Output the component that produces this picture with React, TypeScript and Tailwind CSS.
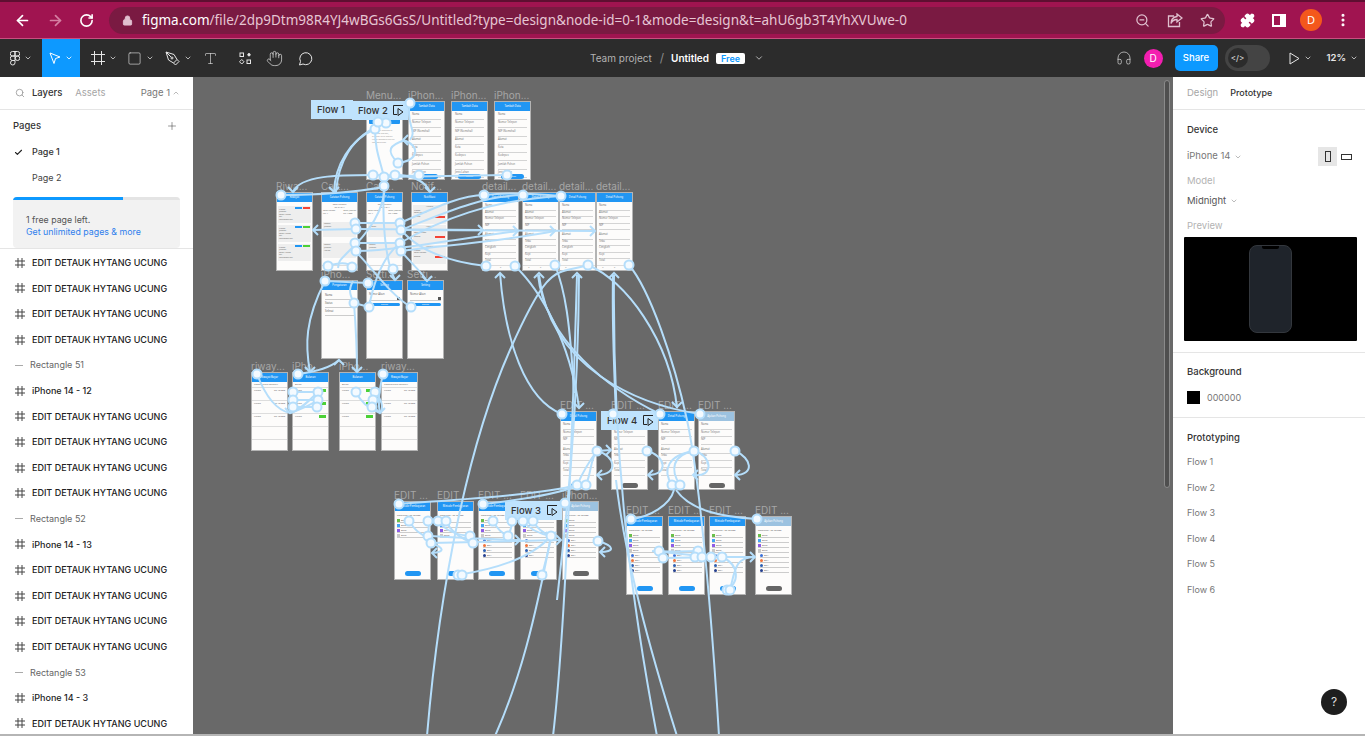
import {
  ArrowLeft, ArrowRight, RotateCw, Lock, ZoomOut, Star, Puzzle, MoreVertical, Headphones,
  Search, Plus, Check, ChevronDown, ChevronUp, Hand, Type, Square,
} from 'lucide-react';

const ink = 'font-["Inter",sans-serif]';

// ---------- wires of the prototype view, in page coordinates ----------
const wires = [
  // long ones running off the bottom
  'M427 736C440 580 470 440 510 350S555 275 588 265',
  'M495 736C520 680 535 620 551 536',
  'M553 736C562 660 570 520 577 275',
  'M557 600C566 520 578 420 579 275',
  'M657 736C635 620 612 470 614 275',
  'M677 736C650 650 625 560 616 480',
  'M719 736C712 620 700 480 687 420S650 290 629 265',
  // between details and edit row
  'M401 230C420 252 450 262 486 266',
  'M562 414C525 400 505 340 500 273',
  'M515 266C540 290 570 340 579 408',
  'M700 414C640 405 550 370 539 275',
  'M660 414C610 390 545 340 538 275',
  'M588 265C625 280 670 340 677 408',
  'M555 265C565 290 570 320 574 393',
  'M613 275C612 320 614 370 616 414',
  // first rows
  'M375 129C350 140 335 165 334 192',
  'M386 123C350 135 338 165 336 192',
  'M373 175C340 175 300 175 293 192',
  'M281 195C310 195 350 193 384 187',
  'M375 129C375 150 380 160 384 177',
  'M410 103C405 125 418 130 410 140',
  'M398 163C385 150 390 145 405 140',
  'M398 163C420 160 420 145 403 140',
  'M384 177L507 175',
  'M373 175L419 176',
  'M395 175C410 175 425 180 430 192',
  'M384 177C388 200 375 225 355 245S340 260 338 268',
  'M384 186C382 220 385 260 395 280',
  'M401 251C410 262 420 270 427 281',
  'M355 251C370 265 390 295 411 307',
  'M400 243C385 255 375 275 369 307',
  'M325 281L368 283',
  'M354 303L369 307',
  'M354 303C350 295 348 290 353 281',
  'M325 281C305 320 305 345 310 372',
  'M354 303C356 330 357 350 357 372',
  'M298 374C315 372 330 368 339 360',
  // second row across
  'M356 229L313 230',
  'M356 229L483 230',
  'M401 230L595 231',
  'M356 251C400 250 450 240 518 231',
  'M401 251C450 245 510 240 555 231',
  'M400 223C430 210 460 195 484 195',
  'M401 230C440 215 480 196 523 195',
  'M400 243C440 220 490 200 561 196',
  'M484 195C510 192 540 194 561 196',
  'M355 223L400 223',
  'M355 243L400 243',
  'M328 266C340 262 348 262 352 267',
  // riwayat row
  'M257 374C265 395 275 410 290 413',
  'M318 392C310 400 300 410 290 413',
  'M318 400C310 405 300 410 290 413',
  'M293 392L318 392',
  'M293 400L318 400',
  'M293 407L317 407',
  'M383 374C378 395 378 405 380 413',
  'M356 392C362 405 372 410 380 413',
  'M375 392C382 400 384 408 380 413',
  // edit row 1
  'M597 451L611 450',
  'M597 451C615 455 620 475 597 475',
  'M586 485C592 470 590 460 597 451',
  'M577 485C584 470 590 460 597 451',
  'M647 451C665 455 670 475 648 475',
  'M694 451C712 455 715 478 693 475',
  'M680 485C670 470 672 455 694 451',
  'M672 485C662 470 668 455 694 451',
  'M735 451C752 458 755 475 735 475',
  'M674 490C670 505 650 517 631 519',
  'M676 490C690 510 720 517 757 519',
  // edit row 2
  'M399 504C450 500 540 495 577 485',
  'M483 504C520 500 555 495 580 485',
  'M428 536C470 538 500 540 520 540',
  'M431 543L561 540',
  'M409 521C415 530 420 535 430 538',
  'M428 521C430 528 428 532 428 536',
  'M438 521C445 530 455 535 470 536',
  'M446 521C450 530 460 538 473 543',
  'M493 521C498 530 502 533 508 536',
  'M512 521C512 528 510 532 508 536',
  'M523 521C530 530 540 534 551 536',
  'M533 521C538 530 545 534 551 536',
  'M458 575C490 570 530 560 551 536',
  'M542 575C546 560 550 545 551 536',
  'M598 541C615 546 615 552 600 552',
  'M431 543C445 548 445 552 432 553',
  // edit row 3
  'M652 551L711 557',
  'M659 551C670 552 690 551 698 551',
  'M663 558L722 557',
  'M722 557L755 557',
  'M730 590C735 570 735 557 755 557',
  'M725 590C740 585 740 565 722 557',
];

const arrows = [
  [293, 192, 'd'], [334, 192, 'd'], [403, 140, 'l'], [430, 192, 'd'], [427, 281, 'd'], [395, 280, 'd'],
  [313, 230, 'l'], [483, 230, 'r'], [518, 231, 'r'], [555, 231, 'r'], [595, 231, 'r'],
  [500, 273, 'u'], [539, 273, 'u'], [577, 273, 'u'], [614, 273, 'u'],
  [579, 408, 'd'], [677, 407, 'd'], [310, 372, 'd'], [357, 372, 'd'], [339, 360, 'u'],
  [290, 413, 'd'], [380, 413, 'd'], [611, 450, 'r'], [597, 475, 'l'], [648, 475, 'l'], [693, 475, 'l'], [735, 475, 'l'],
  [520, 540, 'r'], [561, 540, 'r'], [600, 552, 'l'], [432, 553, 'l'], [755, 557, 'r'], [551, 537, 'd'],
];

const nodes = [
  [410, 103], [386, 123], [375, 129], [378, 122], [398, 163], [373, 175], [384, 177], [395, 175], [419, 175], [507, 175],
  [281, 195], [384, 186], [484, 195], [523, 195], [561, 196], [355, 223], [356, 229], [400, 223], [401, 230],
  [355, 243], [356, 251], [400, 243], [401, 251], [328, 266], [352, 267], [393, 269], [486, 266], [515, 266],
  [555, 265], [588, 265], [629, 265], [325, 281], [368, 283], [354, 303], [369, 307], [411, 307],
  [257, 374], [298, 374], [383, 374], [293, 392], [293, 400], [293, 407], [318, 392], [318, 400], [317, 407],
  [356, 392], [375, 392], [373, 400], [372, 407],
  [562, 414], [613, 414], [660, 414], [700, 414], [597, 451], [647, 451], [694, 451], [735, 451],
  [577, 485], [586, 485], [672, 485], [680, 485],
  [399, 504], [483, 504], [565, 503], [409, 521], [428, 521], [438, 521], [446, 521], [493, 521], [512, 521], [523, 521], [533, 521],
  [428, 536], [431, 543], [470, 536], [473, 543], [508, 536], [551, 536], [598, 541], [458, 575], [462, 575], [542, 575],
  [631, 519], [757, 519], [659, 551], [663, 558], [698, 551], [695, 557], [702, 557], [711, 557], [722, 557], [727, 590], [730, 590],
] as const;

function Wires() {
  const chevron = (x: number, y: number, d: string) => {
    const s = 5;
    if (d === 'd') return `M${x - s} ${y - s}L${x} ${y}L${x + s} ${y - s}`;
    if (d === 'u') return `M${x - s} ${y + s}L${x} ${y}L${x + s} ${y + s}`;
    if (d === 'l') return `M${x + s} ${y - s}L${x} ${y}L${x + s} ${y + s}`;
    return `M${x - s} ${y - s}L${x} ${y}L${x - s} ${y + s}`;
  };
  return (
    <svg className="absolute left-0 top-0 w-[1365px] h-[736px] pointer-events-none" viewBox="0 0 1365 736" fill="none">
      {wires.map((d, i) => (
        <path key={i} d={d} stroke="#b5defb" strokeWidth="2" />
      ))}
      {arrows.map(([x, y, d], i) => (
        <path key={i} d={chevron(x as number, y as number, d as string)} stroke="#b5defb" strokeWidth="2" />
      ))}
      {nodes.map(([x, y], i) => (
        <circle key={i} cx={x} cy={y} r="4.5" fill="#f4faff" stroke="#b5defb" strokeWidth="2" />
      ))}
    </svg>
  );
}

// ---------- tiny phone frames ----------
function Field({ label, value }: { label: string; value?: string }) {
  return (
    <div>
      <p className="text-[2.6px] leading-[3px] text-[#777]">{label}</p>
      <div className="h-[3.5px] border-b border-[#d4d4d4] text-[2.4px] leading-[3px] text-[#888]">{value}</div>
    </div>
  );
}

function Form({ pill }: { pill: string }) {
  return (
    <div className="relative flex-1 px-[3px] pt-[2px]">
      {['Nama', 'Nomor Telepon', 'NIP (Nomshal)', 'Alamat', 'Kota', 'Kodepos', 'Jumlah Pohon', 'Jenis Lahan'].map(l => (
        <div key={l} className="mb-[1.25px]">
          <p className="text-[2.6px] leading-[3px] text-[#777]">{l}</p>
          <div className="h-[4px] border-b border-[#d4d4d4]" />
        </div>
      ))}
      <div className="absolute bottom-[0px] left-[6px] right-[6px] h-[5px] rounded-full bg-[#2196f3] text-center text-[2px] leading-[5px] text-white">{pill}</div>
    </div>
  );
}

function Menu() {
  return (
    <div className="flex-1 px-[2px] pt-[3px]">
      <div className="h-[10px] rounded-[1px] bg-[#2196f3]" />
      <div className="mt-[5px] px-[3px] text-[2.4px] leading-[3px] text-[#999]">
        Selamat datang di aplikasi petani, silakan pilih menu yang tersedia untuk melanjutkan
      </div>
    </div>
  );
}

function HistoryCard({ color }: { color: string }) {
  return (
    <div className="mb-[2px] h-[17px] bg-[#eeeeee] px-[1px] pt-[1px] text-[2.2px] leading-[2.6px] text-[#666]">
      <div className="flex justify-end gap-[1px]">
        <span className="h-[1.5px] w-[7px] bg-[#2196f3]" />
        <span className={`h-[1.5px] w-[7px] ${color}`} />
      </div>
      <p>Nama</p><p>Jumlah</p><p>Total Harga</p><p>Tgl</p><p>Pengambilan</p>
    </div>
  );
}

function History() {
  return (
    <div className="flex-1 px-[1px] pt-[4px]">
      <HistoryCard color="bg-[#f44336]" />
      <HistoryCard color="bg-[#4cd137]" />
      <HistoryCard color="bg-[#4cd137]" />
    </div>
  );
}

function Catch() {
  return (
    <div className="relative flex-1 px-[1px] pt-[2px] text-[2.2px] leading-[2.6px] text-[#666]">
      <p className="text-center">Total Pohong<br />Rp 64.214</p>
      <div className="mt-[1px] flex justify-between"><span>Total Pohon<br />Kg: 4</span><span>Total Jumlah<br />Rp 4.000</span></div>
      <div className="mt-[7px] h-[15px] bg-[#eeeeee] p-[1px]">Petani<br />Jumlah<br />Harga</div>
      <div className="mt-[6px] h-[15px] bg-[#eeeeee] p-[1px]">Petani<br />Jumlah<br />Harga</div>
      <div className="absolute bottom-0 left-0 right-0 h-[5px] border-t border-[#ddd]" />
    </div>
  );
}

function Notif() {
  return (
    <div className="flex-1 px-[1px] pt-[3px] text-[2.2px] leading-[2.6px] text-[#666]">
      {[0, 1, 2].map(i => (
        <div key={i} className="mb-[1px] h-[19px] bg-[#eeeeee] p-[1px]">
          <p className="text-center">Hitung</p>
          <p className="mt-[1px]">Nama</p>
          <p>Total Pohon</p>
          <div className="mt-[1px] flex justify-between"><span>Status</span><span className="h-[2px] w-[10px] bg-[#f44336]" /></div>
        </div>
      ))}
    </div>
  );
}

function Detail() {
  return (
    <div className="relative flex-1 px-[2px] pt-[2px]">
      {['Nama', 'Alamat', 'Nomor Telepon', 'NIP', 'Alamat', 'Tebu', 'Cengkeh', 'Kopi', 'Total'].map((l, i) => (
        <div key={i} className={i === 4 ? 'mt-[3px]' : ''}>
          <Field label={l} />
        </div>
      ))}
      <div className="absolute bottom-0 left-0 right-0 flex h-[5px] justify-around border-t border-[#ddd] bg-[#fdfcfb] text-[2px] text-[#888]">
        <span>o</span><span>o</span><span>o</span>
      </div>
    </div>
  );
}

function Pick() {
  return (
    <div className="flex-1 px-[3px] pt-[4px] text-[2.6px] leading-[3px] text-[#666]">
      {['Nama', 'Status', 'Selesai'].map(l => (
        <div key={l} className="mb-[2px]">
          <p>{l}</p>
          <div className="h-[3px] border-b border-[#ccc]" />
        </div>
      ))}
    </div>
  );
}

function Setting() {
  return (
    <div className="flex-1 px-[2px] pt-[3px] text-[2.6px] leading-[3px] text-[#666]">
      <p>Nomor Akun</p>
      <div className="flex h-[5px] items-center justify-end border-b border-[#ccc]">
        <span className="h-[3px] w-[3px] bg-[#555]" />
      </div>
      <div className="mt-[2px] h-[3px] rounded-full bg-[#2196f3] text-center text-[2px] leading-[3px] text-white">Simpan</div>
    </div>
  );
}

function RowList({ green }: { green?: boolean }) {
  return (
    <div className="flex-1 text-[2.4px] leading-[3px] text-[#666]">
      <p className="border-b border-[#ddd] px-[2px] py-[1px]">{green ? 'Bulan' : 'Pembayaran Terakhir'}</p>
      {[0, 1, 2, 3, 4].map(i => (
        <div key={i} className="flex h-[13px] justify-between border-b border-[#ddd] px-[2px] pt-[1px]">
          <span>{i < 3 ? 'Nama' : ''}</span>
          {i < 3 && (green ? <span className="h-[3px] w-[7px] bg-[#4cd137]" /> : <span>Rp 40.000</span>)}
        </div>
      ))}
    </div>
  );
}

function EditForm({ gray }: { gray?: boolean }) {
  return (
    <div className="relative flex-1 px-[2px] pt-[2px]">
      {['Nama', 'Nomor Telepon', 'NIP', 'Alamat', 'Tebu', 'Kopi', 'Total'].map((l, i) => (
        <div key={i} className={i === 3 ? 'mt-[3px]' : 'mb-[1px]'}>
          <Field label={l} />
        </div>
      ))}
      <div className={`absolute bottom-[1px] left-[10px] h-[5px] w-[16px] rounded-full ${gray ? 'bg-[#666]' : 'bg-[#2196f3]'}`} />
    </div>
  );
}

function EditBank({ gray, full }: { gray?: boolean; full?: boolean }) {
  const dots = ['bg-[#6abf4b]', 'bg-[#42a5f5]', 'bg-[#8e5ce6]', 'bg-[#c9c9c9]'];
  const banks = ['bg-[#3b6fd8]', 'bg-[#f2733a]', 'bg-[#2c5fb3]', 'bg-[#243f8f]'];
  return (
    <div className="relative flex-1 px-[2px] pt-[3px] text-[2.4px] leading-[3px] text-[#666]">
      <p className="mb-[2px]">Rekening : Rp 60.000</p>
      {dots.map(c => (
        <div key={c} className="mb-[1px] flex h-[4px] items-center gap-[1px] border-b border-[#ccc]">
          <span className={`h-[3px] w-[3px] ${c}`} />Bank
        </div>
      ))}
      {full && banks.map(c => (
        <div key={c} className="mb-[1px] ml-[2px] flex h-[4px] items-center gap-[1px] border-b border-[#ccc]">
          <span className={`h-[3px] w-[3px] rounded-full ${c}`} />BCA
        </div>
      ))}
      <div className={`absolute bottom-[3px] left-[10px] h-[5px] w-[16px] rounded-full ${gray ? 'bg-[#666]' : 'bg-[#2196f3]'}`} />
    </div>
  );
}

type FrameProps = {
  pos: string;
  label: string;
  title: string;
  gray?: boolean;
  children: React.ReactNode;
};

function Frame({ pos, label, title, gray, children }: FrameProps) {
  return (
    <div className={`absolute w-[37px] h-[79px] ${pos}`}>
      <p className={`absolute left-0 top-[-12px] whitespace-nowrap text-[10px] leading-[12px] text-[#a6a6a6] ${ink}`}>{label}</p>
      <div className="flex h-full w-full flex-col overflow-hidden border border-[#b4b4b4] bg-[#fdfcfb]">
        <div className={`h-[9px] shrink-0 text-center text-[2.6px] leading-[9px] text-white ${gray ? 'bg-[#9cc2e0]' : 'bg-[#2196f3]'}`}>{title}</div>
        {children}
      </div>
    </div>
  );
}

function FlowChip({ pos, text, icon }: { pos: string; text: string; icon: string }) {
  return (
    <div className={`absolute flex h-[19px] items-center bg-[#bfe3fd] pl-[6px] pt-[1px] text-[9.5px] font-medium text-[#333] ${pos} ${ink}`}>
      <span>{text}</span>
      <svg className={`absolute top-[4px] ${icon}`} width="11" height="12" viewBox="0 0 11 12" fill="none" stroke="#222">
        <path d="M10 .5H.5V9.5H4" />
        <path d="M5 3.500L10 7L5 10.500Z" />
      </svg>
    </div>
  );
}

function Canvas() {
  return (
    <div className="relative flex-1 overflow-hidden bg-[#696969]">
      {/* page coordinates inside this layer */}
      <div className="absolute left-[-193px] top-[-77px] h-[736px] w-[1365px]">
        <Frame pos="left-[366px] top-[101px]" label="Menu..." title=""><Menu /></Frame>
        <Frame pos="left-[408px] top-[101px]" label="iPhon..." title="Tambah Data"><Form pill="Simpan" /></Frame>
        <Frame pos="left-[451px] top-[101px]" label="iPhon..." title="Tambah Data"><Form pill="Simpan" /></Frame>
        <Frame pos="left-[494px] top-[101px]" label="iPhon..." title="Tambah Data"><Form pill="Simpan" /></Frame>

        <Frame pos="left-[276px] top-[192px]" label="Riwa..." title="Riwayat"><History /></Frame>
        <Frame pos="left-[321px] top-[192px]" label="Catt..." title="Catatan Pohong"><Catch /></Frame>
        <Frame pos="left-[366px] top-[192px]" label="Catt..." title="Catatan Pohong"><Catch /></Frame>
        <Frame pos="left-[411px] top-[192px]" label="Notif..." title="Notifikasi"><Notif /></Frame>
        <Frame pos="left-[482px] top-[192px]" label="detail..." title="Detail Pohong"><Detail /></Frame>
        <Frame pos="left-[522px] top-[192px]" label="detail..." title="Detail Pohong"><Detail /></Frame>
        <Frame pos="left-[559px] top-[192px]" label="detail..." title="Detail Pohong"><Detail /></Frame>
        <Frame pos="left-[596px] top-[192px]" label="detail..." title="Detail Pohong"><Detail /></Frame>

        <Frame pos="left-[321px] top-[280px]" label="iPho..." title="Pengaturan"><Pick /></Frame>
        <Frame pos="left-[366px] top-[280px]" label="Setti..." title="Setting"><Setting /></Frame>
        <Frame pos="left-[407px] top-[280px]" label="Setti..." title="Setting"><Setting /></Frame>

        <Frame pos="left-[251px] top-[372px]" label="riway..." title="Riwayat Bayar"><RowList /></Frame>
        <Frame pos="left-[292px] top-[372px]" label="iPho..." title="Bulanan"><RowList green /></Frame>
        <Frame pos="left-[339px] top-[372px]" label="iPho..." title="Bulanan"><RowList green /></Frame>
        <Frame pos="left-[381px] top-[372px]" label="riway..." title="Riwayat Bayar"><RowList /></Frame>

        <Frame pos="left-[560px] top-[411px]" label="EDIT ..." title="Detail Pohong"><EditForm /></Frame>
        <Frame pos="left-[611px] top-[411px]" label="EDIT ..." title=""><EditForm gray /></Frame>
        <Frame pos="left-[658px] top-[411px]" label="EDIT ..." title="Detail Pohong"><EditForm /></Frame>
        <Frame pos="left-[698px] top-[411px]" label="EDIT ..." title="Ajukan Pohong" gray><EditForm gray /></Frame>

        <Frame pos="left-[394px] top-[501px]" label="EDIT ..." title="Metode Pembayaran"><EditBank /></Frame>
        <Frame pos="left-[437px] top-[501px]" label="EDIT ..." title="Metode Pembayaran"><EditBank /></Frame>
        <Frame pos="left-[478px] top-[501px]" label="EDIT ..." title="Metode Pembayaran"><EditBank full /></Frame>
        <Frame pos="left-[520px] top-[501px]" label="EDIT ..." title=""><EditBank full /></Frame>
        <Frame pos="left-[562px] top-[501px]" label="iPhon..." title="Ajukan Pohong" gray><EditBank gray full /></Frame>

        <Frame pos="left-[626px] top-[516px]" label="EDIT ..." title="Metode Pembayaran"><EditBank full /></Frame>
        <Frame pos="left-[668px] top-[516px]" label="EDIT ..." title="Metode Pembayaran"><EditBank full /></Frame>
        <Frame pos="left-[709px] top-[516px]" label="EDIT ..." title="Metode Pembayaran"><EditBank full /></Frame>
        <Frame pos="left-[755px] top-[516px]" label="EDIT ..." title="Ajukan Pohong" gray><EditBank gray full /></Frame>

        <FlowChip pos="left-[311px] top-[100px] w-[42px]" text="Flow 1" icon="hidden" />
        <FlowChip pos="left-[352px] top-[101px] w-[56px]" text="Flow 2" icon="left-[41px]" />
        <FlowChip pos="left-[505px] top-[501px] w-[57px]" text="Flow 3" icon="left-[42px]" />
        <FlowChip pos="left-[601px] top-[411px] w-[57px]" text="Flow 4" icon="left-[42px]" />

        <Wires />

        <div className="absolute left-[1164px] top-[80px] h-[408px] w-[6px] rounded-full border border-[#8a8a8a] bg-[#4f4f4f]" />
      </div>
    </div>
  );
}

// ---------- chrome + toolbar ----------
function BrowserBar() {
  return (
    <div className="h-[39px] shrink-0 border-b border-[#c94f80] bg-[#a01450]">
      <div className="h-[2px] bg-[#5e0f31]" />
      <div className="flex h-[36px] items-center pl-[14px] pr-[14px]">
        <ArrowLeft size={17} strokeWidth={2.4} className="text-white" />
        <ArrowRight size={17} strokeWidth={2.4} className="ml-[16px] text-[#d580a3]" />
        <RotateCw size={15} strokeWidth={2.6} className="ml-[15px] text-white" />
        <div className="ml-[15px] flex h-[27px] flex-1 items-center rounded-full bg-[#7a1a42] pl-[13px] pr-[10px] font-['Noto_Sans',sans-serif] text-[13.52px] text-[#e6c6d3]">
          <Lock size={11} fill="#e0c0cf" className="text-[#e0c0cf]" />
          <span className="ml-[9px] text-white">figma.com</span>
          <span>/file/2dp9Dtm98R4YJ4wBGs6GsS/Untitled?type=design&amp;node-id=0-1&amp;mode=design&amp;t=ahU6gb3T4YhXVUwe-0</span>
          <div className="ml-auto flex items-center gap-[17px] text-[#e0c0cf]">
            <ZoomOut size={15} />
            <svg width="16" height="15" viewBox="0 0 16 15" fill="none" stroke="#e0c0cf" strokeWidth="1.300">
              <path d="M7 3H1.500V13.500H12.500V9" />
              <path d="M10 1L15 5L10 9V6.500C7 6.500 5 8 4 10.500C4 6.500 6.500 4 10 3.500Z" />
            </svg>
            <Star size={15} />
          </div>
        </div>
        <Puzzle size={15} fill="white" className="ml-[15px] text-white" />
        <div className="ml-[17px] flex h-[13px] w-[14px] justify-end border-2 border-white">
          <span className="h-full w-[4px] bg-white" />
        </div>
        <div className="ml-[14px] flex h-[22px] w-[22px] items-center justify-center rounded-full bg-[#f4581c] text-[11px] text-white">D</div>
        <MoreVertical size={16} strokeWidth={2.6} className="ml-[13px] text-white" />
      </div>
    </div>
  );
}

function ToolCaret({ cls = 'text-[#d0d0d0]' }: { cls?: string }) {
  return <ChevronDown size={8} strokeWidth={2.5} className={`ml-[4px] ${cls}`} />;
}

function Toolbar() {
  return (
    <div className={`relative flex h-[38px] shrink-0 items-center bg-[#2c2c2c] text-[#e6e6e6] ${ink}`}>
      <div className="ml-[10px] flex w-[32px] items-center">
        <svg width="10" height="15" viewBox="0 0 10 15" fill="none" stroke="#e6e6e6">
          <path d="M5 .5H2.500a2.250 2.250 0 0 0 0 4.500H5ZM5 .5H7.500a2.250 2.250 0 0 1 0 4.500H5ZM5 5H2.500a2.250 2.250 0 0 0 0 4.500H5Z" />
          <circle cx="7.500" cy="7.250" r="2.250" />
          <path d="M5 9.500H2.500a2.250 2.250 0 1 0 2.500 2.250Z" />
        </svg>
        <ToolCaret />
      </div>
      <div className="flex h-full w-[38px] items-center justify-center bg-[#0d99ff]">
        <svg width="12" height="13" viewBox="0 0 12 13" fill="none" stroke="white"><path d="M1 1l10 4-4.500 1.500L5 11.500Z" /></svg>
        <ToolCaret cls="text-white" />
      </div>
      <div className="ml-[11px] flex items-center">
        <svg width="14" height="14" viewBox="0 0 14 14" fill="none" stroke="#e6e6e6"><path d="M3.500 0v14M10.500 0v14M0 3.500h14M0 10.500h14" /></svg>
        <ToolCaret />
      </div>
      <div className="ml-[10px] flex items-center">
        <Square size={15} strokeWidth={1} />
        <ToolCaret />
      </div>
      <div className="ml-[11px] flex items-center">
        <svg width="15" height="15" viewBox="0 0 15 15" fill="none" stroke="#e6e6e6"><path d="M1 1l8 2.500 3 5-3.500 3.500-5-3ZM1 1l5 5M12 8.500l2 2-3.500 3.500-2-2" /><circle cx="7" cy="7" r="1" /></svg>
        <ToolCaret />
      </div>
      <Type size={15} strokeWidth={1} className="ml-[11px]" />
      <svg className="ml-[21px]" width="13" height="13" viewBox="0 0 13 13" fill="none" stroke="#e6e6e6">
        <rect x="1" y="1" width="3.500" height="3.500" />
        <circle cx="10" cy="2.750" r="1.200" fill="#e6e6e6" />
        <path d="M2.750 7.500L5 9.750 2.750 12 .5 9.750Z" />
        <rect x="8" y="8" width="3.500" height="3.500" />
      </svg>
      <Hand size={17} strokeWidth={1} className="ml-[14px]" />
      <svg className="ml-[15px]" width="15" height="15" viewBox="0 0 15 15" fill="none" stroke="#e6e6e6"><path d="M1.500 14l1-3.500A6 6 0 1 1 5 13Z" /></svg>

      <div className="absolute left-[590px] flex items-center text-[10px]">
        <span className="text-[#b3b3b3]">Team project</span>
        <span className="ml-[8px] text-[12px] text-[#8a8a8a]">/</span>
        <span className="ml-[7px] font-semibold text-white">Untitled</span>
        <span className="ml-[7px] rounded-[2px] bg-white px-[5px] text-[9px] font-semibold leading-[11px] text-[#0d99ff]">Free</span>
        <ChevronDown size={10} className="ml-[9px] text-[#d0d0d0]" />
      </div>

      <div className="ml-auto flex items-center pr-[7px]">
        <Headphones size={16} strokeWidth={1} />
        <div className="ml-[12px] flex h-[19px] w-[19px] items-center justify-center rounded-full bg-[#f31eb0] text-[10px] text-white">D</div>
        <div className="ml-[12px] flex h-[26px] w-[43px] items-center justify-center rounded-[5px] bg-[#0d99ff] text-[9.5px] font-medium text-white">Share</div>
        <div className="ml-[7px] flex h-[26px] w-[45px] items-center rounded-full bg-[#444] pl-[3px]">
          <div className="flex h-[20px] w-[20px] items-center justify-center rounded-full bg-[#2c2c2c] text-[8px] text-[#e6e6e6]">&lt;/&gt;</div>
        </div>
        <svg className="ml-[19px]" width="11" height="13" viewBox="0 0 11 13" fill="none" stroke="#e6e6e6"><path d="M1 1l9 5.500L1 12Z" /></svg>
        <ToolCaret />
        <span className="ml-[15px] text-[9.5px] font-semibold">12%</span>
        <ToolCaret />
      </div>
    </div>
  );
}

// ---------- side panels ----------
const E = 'EDIT DETAUK HYTANG UCUNG';
const layers: [string, 'frame' | 'rect'][] = [
  [E, 'frame'], [E, 'frame'], [E, 'frame'], [E, 'frame'], ['Rectangle 51', 'rect'], ['iPhone 14 - 12', 'frame'],
  [E, 'frame'], [E, 'frame'], [E, 'frame'], [E, 'frame'], ['Rectangle 52', 'rect'], ['iPhone 14 - 13', 'frame'],
  [E, 'frame'], [E, 'frame'], [E, 'frame'], [E, 'frame'], ['Rectangle 53', 'rect'], ['iPhone 14 - 3', 'frame'], [E, 'frame'],
];

function LeftPanel() {
  return (
    <div className={`w-[193px] shrink-0 overflow-hidden bg-white text-[#333] ${ink}`}>
      <div className="flex h-[33px] items-center border-b border-[#e5e5e5] pl-[15px] pr-[13px] text-[9.5px]">
        <Search size={10} className="text-[#999]" />
        <span className="ml-[7px] font-medium">Layers</span>
        <span className="ml-[13px] text-[#a6a6a6]">Assets</span>
        <span className="ml-auto text-[#777]">Page 1</span>
        <ChevronUp size={8} className="ml-[2px] text-[#999]" />
      </div>
      <div className="flex h-[29px] items-center pl-[13px] pr-[15px] pt-[3px] text-[9.5px] font-medium">
        <span>Pages</span>
        <Plus size={12} strokeWidth={1} className="ml-auto" />
      </div>
      <div className="flex h-[26px] items-center pl-[14px] text-[9px]">
        <Check size={9} strokeWidth={3} className="text-[#222]" />
        <span className="ml-[9px] font-medium">Page 1</span>
      </div>
      <div className="flex h-[26px] items-center pl-[32px] text-[9px] text-[#444]">Page 2</div>
      <div className="mx-[13px] mt-[6px] h-[51px] overflow-hidden rounded-[4px] bg-[#f2f2f2] text-[8.8px]">
        <div className="h-[3px] bg-[#e4e4e4]"><div className="h-full w-[110px] bg-[#0d99ff]" /></div>
        <p className="ml-[13px] mt-[14px] leading-[12px] text-[#555]">1 free page left.</p>
        <p className="ml-[13px] leading-[12px] text-[#2f80ed]">Get unlimited pages &amp; more</p>
      </div>
      <div className="border-t border-[#e5e5e5] pt-[1px]">
        {layers.map(([t, k], i) => (
          <div key={i} className="flex h-[25.6px] items-center pl-[15px]">
            {k === 'frame' ? (
              <svg width="10" height="10" viewBox="0 0 10 10" fill="none" stroke="#444"><path d="M3 0v10M7 0v10M0 3h10M0 7h10" /></svg>
            ) : (
              <span className="h-px w-[8px] bg-[#aaa]" />
            )}
            <span className={`ml-[7px] whitespace-nowrap text-[9px] ${k === 'frame' ? 'font-medium text-[#222]' : 'text-[#666]'}`}>{t}</span>
          </div>
        ))}
      </div>
    </div>
  );
}

function RightPanel() {
  return (
    <div className={`relative w-[192px] shrink-0 bg-white text-[9.5px] text-[#333] ${ink}`}>
      <div className="flex h-[33px] items-center border-b border-[#e5e5e5] pl-[14px]">
        <span className="text-[#a6a6a6]">Design</span>
        <span className="ml-[12px] text-[9px] font-medium">Prototype</span>
      </div>
      <div className="border-b border-[#e5e5e5] pb-[11px] pl-[14px]">
        <p className="pt-[14px] font-medium leading-[12px]">Device</p>
        <div className="mt-[11px] flex h-[19px] items-center">
          <span className="text-[#777]">iPhone 14</span>
          <ChevronDown size={8} className="ml-[3px] text-[#999]" />
          <div className="ml-auto flex h-[19px] w-[19px] items-center justify-center bg-[#e6e6e6]">
            <span className="h-[11px] w-[6px] border border-[#333]" />
          </div>
          <span className="ml-[4px] mr-[13px] h-[6px] w-[11px] border border-[#333]" />
        </div>
        <p className="mt-[9px] leading-[12px] text-[#b3b3b3]">Model</p>
        <div className="mt-[8px] flex items-center leading-[12px]">
          <span className="text-[#555]">Midnight</span>
          <ChevronDown size={8} className="ml-[4px] text-[#999]" />
        </div>
        <p className="mt-[13px] leading-[12px] text-[#b3b3b3]">Preview</p>
        <div className="-ml-[3px] mt-[5px] flex h-[104px] w-[173px] items-center justify-center rounded-[1px] bg-black">
          <div className="relative h-[88px] w-[43px] rounded-[8px] border border-[#33373d] bg-[#1f242b]">
            <div className="absolute left-[12px] top-0 h-[3px] w-[17px] rounded-b-[2px] bg-black" />
          </div>
        </div>
      </div>
      <div className="h-[65px] border-b border-[#e5e5e5] pl-[14px]">
        <p className="pt-[13px] font-medium leading-[12px]">Background</p>
        <div className="mt-[13px] flex items-center">
          <span className="h-[13px] w-[13px] bg-black" />
          <span className="ml-[7px] text-[9px] text-[#777]">000000</span>
        </div>
      </div>
      <div className="pl-[14px]">
        <p className="pt-[14px] font-medium leading-[12px]">Prototyping</p>
        <div className="mt-[5px]">
          {['Flow 1', 'Flow 2', 'Flow 3', 'Flow 4', 'Flow 5', 'Flow 6'].map(f => (
            <p key={f} className="h-[25.6px] text-[9px] leading-[25.6px] text-[#777]">{f}</p>
          ))}
        </div>
      </div>
      <div className="absolute bottom-[19px] right-[18px] flex h-[26px] w-[26px] items-center justify-center rounded-full bg-[#1e1e1e] text-[12px] text-[#ddd]">?</div>
    </div>
  );
}

export default function App() {
  return (
    <div className="flex h-[736px] w-[1365px] flex-col overflow-hidden bg-white">
      <BrowserBar />
      <Toolbar />
      <div className="flex min-h-0 flex-1">
        <LeftPanel />
        <Canvas />
        <RightPanel />
      </div>
      <div className="h-[2px] shrink-0 bg-[#b5b5b5]" />
    </div>
  );
}
